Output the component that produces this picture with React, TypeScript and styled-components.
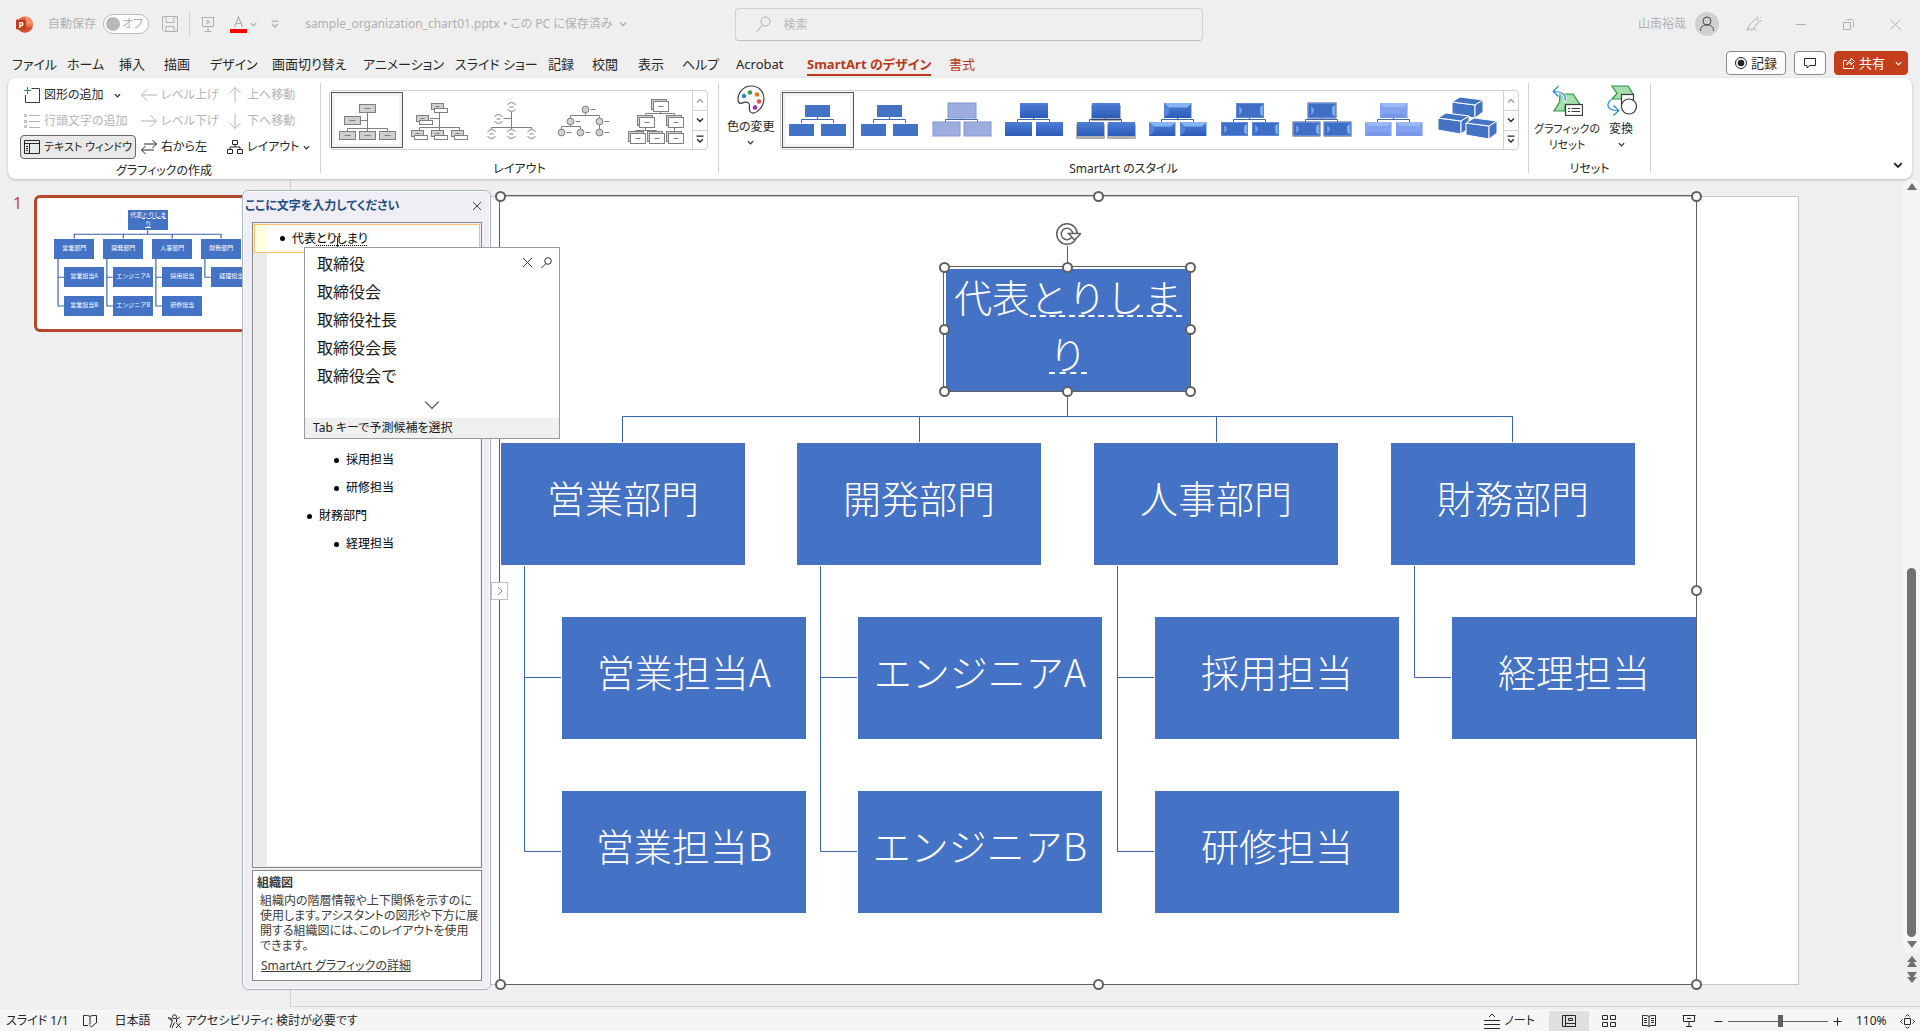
import React from "react";
import styled, { createGlobalStyle, css } from "styled-components";

const ui = `"Noto Sans", "Noto Sans CJK JP", sans-serif`;
const blue = "#4472c4";

const Global = createGlobalStyle`
  * { box-sizing: border-box; }
  body { margin: 0; background: #efefef; color: #262626; font-family: ${ui}; font-size: 12px; line-height: 16px; font-feature-settings: "palt"; overflow: hidden; }
  button, input { font: inherit; font-feature-settings: inherit; color: inherit; padding: 0; margin: 0; border: 0; background: none; }
  button { display: flex; align-items: center; white-space: nowrap; cursor: default; }
  svg { display: block; flex: none; }
  ul { list-style: none; margin: 0; padding: 0; }
`;

const Page = styled.div`
  height: 100vh;
  display: flex;
  flex-direction: column;
`;

/* ---------- title bar ---------- */
const TitleBar = styled.header`
  height: 48px;
  display: grid;
  grid-template-columns: 718fr 468px 700fr;
  align-items: center;
  color: #b0b0b0;
  padding: 0 17px 0 16px;
`;
const TitleSide = styled.div<{ $end?: boolean }>`
  display: flex;
  align-items: center;
  justify-content: ${(p) => (p.$end ? "flex-end" : "flex-start")};
  white-space: nowrap;
`;
const AutoSave = styled.label`
  display: flex;
  align-items: center;
  gap: 7px;
  margin: 0 13px 0 15px;
`;
const Toggle = styled.span`
  position: relative;
  width: 46px;
  height: 20px;
  border: 1px solid #b8b8b8;
  border-radius: 10px;
  background: #fff;
  line-height: 18px;
  text-align: right;
  padding-right: 5px;
  input {
    appearance: none;
    position: absolute;
    left: 2px;
    top: 2px;
    width: 14px;
    height: 14px;
    border-radius: 50%;
    background: #b8b8b8;
  }
`;
const Rule = styled.span`
  width: 1px;
  height: 24px;
  background: #d0d0d0;
  margin: 0 11px;
`;
const QuickButton = styled.button`
  margin-right: 14px;
`;
const FileName = styled.span`
  margin: 0 6px 0 12px;
`;
const Search = styled.label`
  display: flex;
  align-items: center;
  gap: 13px;
  height: 33px;
  margin-top: 1px;
  padding: 0 20px;
  border: 1px solid #d0d0d0;
  border-bottom-color: #bdbdbd;
  border-radius: 4px;
  input { flex: 1; outline: 0; }
  input::placeholder { color: #b8b8b8; opacity: 1; }
`;
const Avatar = styled.span`
  width: 24px;
  height: 24px;
  border-radius: 50%;
  background: #d0d0d0;
  display: grid;
  place-items: center;
  margin: 0 27px 0 9px;
`;
const WindowButton = styled.button`
  width: 16px;
  height: 24px;
  justify-content: center;
  margin-left: 31px;
`;

/* ---------- tabs ---------- */
const TabRow = styled.nav`
  height: 30px;
  display: flex;
  align-items: center;
  padding: 0 12px;
  font-size: 13px;
`;
const Tab = styled.button<{ $w: number; $active?: boolean; $accent?: boolean }>`
  width: ${(p) => p.$w}px;
  height: 28px;
  padding-top: 4px;
  flex: none;
  ${(p) => p.$accent && css`color: #b7391a;`}
  ${(p) => p.$active && css`font-weight: 700;`}
  span {
    border-bottom: 2px solid ${(p) => (p.$active ? "#b7391a" : "transparent")};
    height: 22px;
    line-height: 20px;
  }
`;
const Actions = styled.div`
  margin-left: auto;
  display: flex;
  gap: 8px;
  font-size: 13px;
`;
const ActionButton = styled.button<{ $primary?: boolean }>`
  height: 24px;
  gap: 4px;
  padding: 0 8px;
  border: 1px solid ${(p) => (p.$primary ? "#c43e1c" : "#8a8a8a")};
  border-radius: 4px;
  background: ${(p) => (p.$primary ? "#c43e1c" : "#fff")};
  color: ${(p) => (p.$primary ? "#fff" : "#262626")};
`;
const ShareChevron = styled.span`
  margin: 0 -3px 0 6px;
`;

/* ---------- ribbon ---------- */
const Ribbon = styled.section`
  height: 101px;
  margin: 0 8px;
  display: flex;
  background: #fff;
  border-radius: 8px;
  box-shadow: 0 1px 3px rgba(0, 0, 0, 0.22);
  position: relative;
  z-index: 3;
  flex: none;
`;
const Group = styled.div<{ $w: number }>`
  width: ${(p) => p.$w}px;
  display: flex;
  flex-direction: column;
  margin: 5px 0 6px;
  border-right: 1px solid #d4d4d4;
`;
const GroupBody = styled.div<{ $pad: string }>`
  flex: 1;
  display: flex;
  padding: ${(p) => p.$pad};
`;
const GroupLabel = styled.div`
  height: 16px;
  line-height: 24px;
  text-align: center;
`;
const CommandColumn = styled.div<{ $w: number }>`
  width: ${(p) => p.$w}px;
  display: flex;
  flex-direction: column;
  align-items: flex-start;
  gap: 2px;
`;
const Command = styled.button<{ $pressed?: boolean }>`
  height: 24px;
  gap: 4px;
  padding: 0 3px;
  border: 1px solid ${(p) => (p.$pressed ? "#666" : "transparent")};
  border-radius: 4px;
  background: ${(p) => (p.$pressed ? "#e9e9e9" : "none")};
  ${(p) => p.$pressed && css`font-size: 11px;`}
  &:disabled { color: #b4b4b4; }
`;
const Gallery = styled.div`
  height: 60px;
  display: flex;
  border: 1px solid #d0d0d0;
  border-radius: 4px;
  flex: 1;
`;
const GalleryItems = styled.div`
  flex: 1;
  display: flex;
  padding: 1px;
`;
const GalleryItem = styled.button<{ $selected?: boolean }>`
  width: 72px;
  height: 56px;
  justify-content: center;
  ${(p) => p.$selected && css`border: 1px solid #555; box-shadow: inset 0 0 0 3px #f3f3f3;`}
`;
const GalleryScroll = styled.div`
  width: 15px;
  display: grid;
  grid-template-rows: 1fr 1fr 1fr;
  border-left: 1px solid #d0d0d0;
  button { justify-content: center; }
  button + button { border-top: 1px solid #d0d0d0; }
`;
const BigButton = styled.button<{ $w: number; $compact?: boolean }>`
  width: ${(p) => p.$w}px;
  ${(p) => p.$compact && css`font-size: 11px;`}
  flex-direction: column;
  text-align: center;
  margin-top: 2px;
  height: 62px;
  svg + span { margin-top: 5px; }
  span + svg { margin-top: 4px; }
`;
const Collapse = styled.button`
  margin: auto 9px 9px auto;
`;

/* ---------- workspace ---------- */
const Workspace = styled.main`
  flex: 1;
  min-height: 0;
  display: flex;
  position: relative;
`;
const Thumbnails = styled.aside`
  width: 291px;
  border-right: 1px solid #d0d0d0;
  display: flex;
  align-items: flex-start;
  padding: 16px 14px 16px 13px;
  gap: 12px;
  margin-bottom: 3px;
  color: #c8472b;
  font-size: 16px;
`;
const Thumb = styled.button`
  width: 239px;
  height: 137px;
  border: 3px solid #b7472a;
  border-radius: 6px;
  background: #fff;
  position: relative;
  flex: none;
`;
const Stage = styled.div`
  flex: 1;
  min-width: 0;
  display: flex;
  border-bottom: 1px solid #d0d0d0;
  margin: 0 0 3px 2px;
  padding: 17px 0 21px 104px;
`;
const Slide = styled.div`
  flex: 1;
  background: #fff;
  border: 1px solid #c6c6c6;
  border-left: 0;
  position: relative;
`;
const ScrollTrack = styled.div`
  width: 17px;
  margin-left: 104px;
  margin-top: -17px;
  display: flex;
  flex-direction: column;
  align-items: center;
  color: #707070;
`;
const Track = styled.div`
  width: 17px;
  flex: 1;
  display: flex;
  flex-direction: column;
  align-items: center;
  background: #f5f5f5;
  border-radius: 8px;
  padding: 4px 0 5px;
`;
const ScrollThumb = styled.div`
  width: 9px;
  height: 369px;
  border-radius: 5px;
  background: #707070;
  margin: auto 0 4px;
`;
const ScrollStep = styled.button`
  height: 16px;
`;

/* ---------- diagram ---------- */
const Node = styled.div<{ $s: number; $x: number; $y: number; $lift?: number }>`
  position: absolute;
  left: ${(p) => Math.round(p.$x * p.$s)}px;
  top: ${(p) => Math.round(p.$y * p.$s)}px;
  width: ${(p) => Math.round(244 * p.$s)}px;
  height: ${(p) => Math.round(122 * p.$s)}px;
  padding-bottom: ${(p) => Math.round((p.$lift ?? 16) * p.$s)}px;
  background: ${blue};
  color: #fff;
  display: flex;
  align-items: center;
  justify-content: center;
  text-align: center;
  white-space: nowrap;
  font-family: "Noto Sans CJK JP", sans-serif;
  font-weight: ${(p) => (p.$s === 1 ? 300 : 400)};
  font-feature-settings: normal;
  font-size: ${(p) => Math.round(38 * p.$s)}px;
  line-height: ${(p) => Math.round(57 * p.$s)}px;
`;
const Composing = styled.span<{ $s: number }>`
  border-bottom: ${(p) => (p.$s === 1 ? 2 : 1)}px dashed #fff;
  line-height: 1;
  display: inline-block;
`;
const Lines = styled.svg`
  position: absolute;
  left: 0;
  top: 0;
  overflow: visible;
`;
const Frame = styled.div<{ $x: number; $y: number; $w: number; $h: number }>`
  position: absolute;
  left: ${(p) => p.$x}px;
  top: ${(p) => p.$y}px;
  width: ${(p) => p.$w}px;
  height: ${(p) => p.$h}px;
  border: 1px solid #606060;
`;
const Handle = styled.i<{ $x: number; $y: number }>`
  position: absolute;
  left: calc(${(p) => p.$x}% - 5px);
  top: calc(${(p) => p.$y}% - 5px);
  width: 11px;
  height: 11px;
  border: 2px solid #606060;
  border-radius: 50%;
  background: #fff;
`;
const Rotate = styled.svg`
  position: absolute;
  left: calc(50% - 12px);
  top: -48px;
`;

const columns = [
  { name: "営業部門", people: ["営業担当A", "営業担当B"] },
  { name: "開発部門", people: ["エンジニアA", "エンジニアB"] },
  { name: "人事部門", people: ["採用担当", "研修担当"] },
  { name: "財務部門", people: ["経理担当"] },
];
const colX = [104, 400, 697, 994];
const rowY = [420, 594];

function Chart({ s }: { s: number }) {
  return (
    <>
      <Lines width={1401 * s} height={788 * s} viewBox="0 0 1401 788" fill="none" stroke="#3a62ab" strokeWidth={s === 1 ? 1 : 7}>
        <path d="M670.5 195V219.5M225.5 245V219.5H1115.5V245M522.5 219.5V245M819.5 219.5V245" />
        {columns.map((c, i) => (
          <path key={c.name} d={c.people.map((_, k) => `M${colX[i] + 23.5} 369V${rowY[k] + 60.5}H${colX[i] + 60}`).join("")} />
        ))}
      </Lines>
      <Node $s={s} $x={549} $y={72} $lift={12}>
        <div>
          代表<Composing $s={s}>とりしま</Composing>
          <br />
          <Composing $s={s}>り</Composing>
        </div>
      </Node>
      {columns.map((c, i) => (
        <React.Fragment key={c.name}>
          <Node $s={s} $x={colX[i]} $y={246}>{c.name}</Node>
          {c.people.map((p, k) => (
            <Node key={p} $s={s} $x={colX[i] + 61} $y={rowY[k]}>{p}</Node>
          ))}
        </React.Fragment>
      ))}
    </>
  );
}

const ring: [number, number][] = [[0, 0], [50, 0], [100, 0], [0, 50], [100, 50], [0, 100], [50, 100], [100, 100]];

/* ---------- text pane ---------- */
const TextPane = styled.section`
  position: absolute;
  z-index: 1;
  left: 242px;
  top: 11px;
  bottom: 20px;
  width: 249px;
  display: flex;
  flex-direction: column;
  gap: 2px;
  padding: 1px 8px 8px 9px;
  background: #efeef5;
  border: 1px solid #a4b6bf;
  border-radius: 6px;
  box-shadow: inset 0 0 0 1px #fff;
  color: #000;
`;
const PaneTitle = styled.div`
  height: 28px;
  margin: 0 0 0 -7px;
  display: flex;
  align-items: center;
  justify-content: space-between;
  font-weight: 700;
  white-space: nowrap;
  color: #1f4e86;
`;
const Outline = styled.div`
  flex: 1;
  border: 1px solid #868686;
  background: linear-gradient(90deg, #ebebeb 13px, #fff 13px) content-box #fff;
  padding: 1px;
`;
const ActiveLine = styled.div`
  height: 29px;
  border: 1px solid #f7c067;
  background: linear-gradient(90deg, #ffffe1 12px, #fff 12px);
  display: flex;
  align-items: center;
  padding-left: 25px;
  position: relative;
  u { text-decoration: underline dotted; text-underline-offset: 2px; }
`;
const Bullet = styled.span`
  width: 5px;
  height: 5px;
  border-radius: 50%;
  background: #000;
  margin-right: 7px;
`;
const Branch = styled.ul`
  margin-top: 193px;
`;
const Leaf = styled.li<{ $level: number }>`
  height: 28px;
  display: flex;
  align-items: center;
  padding-left: ${(p) => 26 + p.$level * 27}px;
`;
const IBeam = styled.svg`
  position: absolute;
  left: 78px;
  top: 11px;
`;
const About = styled.div`
  height: 111px;
  border: 1px solid #868686;
  background: #fff;
  color: #3c3c3c;
  padding: 4px 4px;
  line-height: 15px;
  p { margin: 3px 0 5px 3px; width: 219px; }
  a { color: inherit; margin-left: 4px; }
`;
const Expander = styled.button`
  position: absolute;
  left: 491px;
  top: 403px;
  z-index: 2;
  width: 17px;
  height: 18px;
  justify-content: center;
  background: #fff;
  border: 1px solid #c0c0c0;
`;
const Ime = styled.div`
  position: absolute;
  z-index: 2;
  left: 304px;
  top: 68px;
  width: 256px;
  height: 192px;
  background: #fff;
  border: 1px solid #9a9a9a;
  color: #1a1a1a;
  display: flex;
  flex-direction: column;
  font-size: 16px;
  font-feature-settings: normal;
`;
const ImeBody = styled.div`
  display: flex;
  flex: 1;
  justify-content: space-between;
  padding: 2px 7px 0 12px;
  li { height: 28px; line-height: 28px; }
`;
const ImeTools = styled.div`
  display: flex;
  gap: 8px;
  height: 24px;
  align-items: center;
`;
const ImeMore = styled.button`
  height: 24px;
  padding-bottom: 2px;
  justify-content: center;
`;
const ImeHint = styled.div`
  height: 20px;
  line-height: 19px;
  padding-left: 8px;
  background: #efefef;
  font-size: 12px;
  font-feature-settings: "palt";
`;

/* ---------- status bar ---------- */
const StatusBar = styled.footer`
  height: 21px;
  flex: none;
  display: flex;
  align-items: center;
  background: #f5f5f5;
  border-top: 1px solid #fafafa;
  padding: 0 5px 0 6px;
`;
const StatusItem = styled.button<{ $gap: number; $end?: boolean }>`
  gap: 4px;
  margin-right: ${(p) => p.$gap}px;
  ${(p) => p.$end && css`margin-left: auto;`}
`;
const ViewButton = styled.button<{ $on?: boolean }>`
  width: 40px;
  height: 20px;
  justify-content: center;
  background: ${(p) => (p.$on ? "#dfdfdf" : "none")};
`;
const ZoomGroup = styled.div`
  display: flex;
  align-items: center;
  gap: 5px;
  margin-left: 5px;
`;
const Zoom = styled.input`
  appearance: none;
  width: 100px;
  height: 12px;
  background: linear-gradient(#606060, #606060) center / 100% 1px no-repeat;
  &::-webkit-slider-thumb {
    appearance: none;
    width: 5px;
    height: 12px;
    background: #606060;
  }
`;
const ZoomValue = styled.button`
  width: 32px;
  margin: 0 12px 0 14px;
`;

/* ---------- icons ---------- */
const Chevron = ({ w = 7, up = false, c = "currentColor", t = 1.4 }: { w?: number; up?: boolean; c?: string; t?: number }) => (
  <svg width={w} height={w} viewBox="0 0 8 8" fill="none" stroke={c} strokeWidth={t}>
    <path d={up ? "M1 5.5 4 2.5 7 5.5" : "M1 2.5 4 5.5 7 2.5"} />
  </svg>
);
const MoreIcon = ({ c = "currentColor" }) => (
  <svg width="8" height="9" viewBox="0 0 8 9" fill="none" stroke={c} strokeWidth="1.3">
    <path d="M0.5 1.2H7.5M1.2 4.2 4 7 6.8 4.2" />
  </svg>
);
const Line = ({ d, s = 16, c = "currentColor", children }: { d: string; s?: number; c?: string; children?: React.ReactNode }) => (
  <svg width={s} height={s} viewBox={`0 0 ${s} ${s}`} fill="none" stroke={c}>
    <path d={d} />
    {children}
  </svg>
);
const PptLogo = () => (
  <svg width="17" height="17" viewBox="0 0 17 17">
    <circle cx="9" cy="8.5" r="8" fill="#ed6c47" />
    <path d="M9 .5a8 8 0 0 1 8 8H9z" fill="#ff8f6b" />
    <path d="M1.5 11h15A8 8 0 0 1 3 14z" fill="#d35230" />
    <rect x="0" y="3.6" width="10" height="10" rx="1" fill="#c43e1c" />
    <text x="2.4" y="11.6" fontSize="8.5" fontWeight="700" fill="#fff" fontFamily="Open Sans, sans-serif">P</text>
  </svg>
);

function LayoutIcon({ kind }: { kind: number }) {
  const g = "#7f7f7f", f = "#d0d0d0";
  const tree = "M31 11V33M11 33V29.5H51V33";
  if (kind === 0)
    return (
      <svg width="62" height="44" viewBox="0 0 62 44" stroke={g} fill={f}>
        <path d="M31.5 13V33M11.5 33V30.5H51.5V33M24 22.5H31" fill="none" />
        {[[23.5, 6.5], [8.5, 18.5], [3.5, 33.5], [23.5, 33.5], [43.5, 33.5]].map(([x, y]) => (
          <g key={x + "," + y}><rect x={x} y={y} width="16" height="8" /><path d={`M${x + 5} ${y + 4}h6`} /></g>
        ))}
      </svg>
    );
  if (kind === 1)
    return (
      <svg width="62" height="44" viewBox="0 0 62 44" stroke={g} fill={f}>
        <path d="M31.5 13V33M11.5 33V29.5H51.5V33M22 20.5H31" fill="none" />
        {[[23.5, 5.5], [8.5, 17.5], [3.5, 32.5], [23.5, 32.5], [43.5, 32.5]].map(([x, y]) => (
          <g key={x + "," + y}><rect x={x} y={y} width="12" height="6" /><path d={`M${x + 4} ${y + 3}h4`} /><rect x={x + 3} y={y + 5} width="13" height="4" fill="#fff" /></g>
        ))}
      </svg>
    );
  if (kind === 2)
    return (
      <svg width="62" height="44" viewBox="0 0 62 44" stroke={g} fill="none">
        <path d={tree + "M22 20.5H31"} transform="translate(.5 0)" />
        {[[31.5, 9], [18.5, 21], [11.5, 36], [31.5, 36], [51.5, 36]].map(([x, y]) => (
          <g key={x + "," + y}><circle cx={x} cy={y} r="5" fill="#fff" stroke="none" /><path d={`M${x - 4} ${y - 2}a4.5 4.5 0 0 1 8 0M${x - 4} ${y + 2}a4.5 4.5 0 0 0 8 0M${x - 2} ${y}h4`} /></g>
        ))}
      </svg>
    );
  if (kind === 3)
    return (
      <svg width="62" height="44" viewBox="0 0 62 44" stroke={g} fill={f}>
        <path d="M33.5 12V17.5M18.5 22V17.5H47.5V33M18.5 26V28.5M9.5 33V28.5H28.5V33" fill="none" />
        {[[33.5, 11.5], [18.5, 23.5], [47.5, 23.5], [9.5, 34.5], [28.5, 34.5], [47.5, 34.5]].map(([x, y]) => (
          <g key={x + "," + y}><circle cx={x} cy={y} r="3.4" /><path d={`M${x + 5} ${y}h5`} /></g>
        ))}
      </svg>
    );
  return (
    <svg width="62" height="50" viewBox="0 0 62 50" stroke={g} fill={f}>
      <path d="M36.5 16V18.5M21.5 22V18.5H50.5V22M21.5 32V35.5M11.5 38V35.5H32.5V38M50.5 32V38" fill="none" />
      {[[27.5, 4.5], [13.5, 20.5], [42.5, 20.5], [4.5, 36.5], [23.5, 36.5], [42.5, 36.5]].map(([x, y]) => (
        <g key={x + "," + y}><rect x={x} y={y} width="15" height="10" /><rect x={x + 2} y={y + 2} width="15" height="10" fill="#fff" /><path d={`M${x + 7} ${y + 7}h5`} /></g>
      ))}
    </svg>
  );
}

function StyleIcon({ kind }: { kind: number }) {
  if (kind === 9)
    return (
      <svg width="64" height="50" viewBox="0 0 64 50" fill={blue} stroke="#fff" strokeWidth="1">
        {[[18, 2], [4, 18], [32, 23]].map(([x, y]) => (
          <g key={x}>
            <path d={`M${x} ${y + 5} ${x + 23} ${y + 8}V${y + 21}L${x} ${y + 17}z`} />
            <path d={`M${x} ${y + 5} ${x + 8} ${y} ${x + 31} ${y + 3} ${x + 23} ${y + 8}z`} />
            <path d={`M${x + 23} ${y + 8} ${x + 31} ${y + 3}V${y + 15}L${x + 23} ${y + 21}z`} />
          </g>
        ))}
      </svg>
    );
  const small = kind < 2;
  const boxes = small ? [[19, 7, 25, 12], [3, 26, 25, 12], [35, 26, 25, 12]] : [[18, 5, 28, 15], [3, 24, 27, 14], [34, 24, 27, 14]];
  const fill = small ? blue : kind === 2 ? "#9dade0" : kind === 8 ? "#83a3f0" : kind > 5 ? "#3f6ec6" : `url(#face${kind})`;
  const stroke = kind === 2 ? "#8196d2" : kind === 7 ? "#4a5673" : "none";
  return (
    <svg width="64" height="44" viewBox="0 0 64 44">
      <defs>
        <linearGradient id={`face${kind}`} x1="0" y1="0" x2="0" y2="1">
          <stop offset="0" stopColor="#4f7fd6" />
          <stop offset="1" stopColor="#2a5cb8" />
        </linearGradient>
        <linearGradient id={`glow${kind}`} x1="0" y1="0" x2="1" y2="0">
          <stop offset="0" stopColor="#9cd0ff" stopOpacity="0.5" />
          <stop offset="0.5" stopColor="#9cd0ff" />
          <stop offset="1" stopColor="#9cd0ff" stopOpacity="0.5" />
        </linearGradient>
      </defs>
      <path d="M31.5 19V21.5M15.5 25V21.5H47.5V25" fill="none" stroke="#4267ac" />
      {boxes.map(([x, y, w, h]) => (
        <g key={x + "," + y}>
          {kind === 4 && <rect x={x - 1} y={y + 2} width={w + 2} height={h + 1} rx="1" fill="#000" opacity="0.3" />}
          <rect x={x} y={y} width={w} height={h} fill={fill} stroke={stroke} />
          {kind === 5 && (
            <>
              <path d={`M${x} ${y}h${w}l-5 4.500h-${w - 10}z`} fill="#86b4f4" />
              <path d={`M${x} ${y + h}v-${h}l5 4.500v${h - 9}z`} fill="#5584d8" />
              <path d={`M${x + w - 1} ${y}v${h}h1v-${h}z`} fill="#9cc4f6" />
            </>
          )}
          {(kind === 6 || kind === 7) && (
            <>
              <rect x={x + 0.5} y={y + 0.5} width={w - 1} height={h - 1} fill="none" stroke="#5e8bdc" />
              <path d={`M${x + 3} ${y + 3}v${h - 6}l3 -3v-${h - 12}z`} fill={`url(#glow${kind})`} opacity="0.6" />
              <path d={`M${x + w - 1} ${y + 2}v${h - 3}l-3 -3v-${h - 8}z`} fill={`url(#glow${kind})`} opacity="0.8" />
            </>
          )}
          {kind === 8 && (
            <>
              <path d={`M${x} ${y}h${w}l-4 4h-${w - 8}z`} fill="#9cb8f6" />
              <path d={`M${x} ${y + h}h${w}l-4 -4h-${w - 8}z`} fill="#7696e6" />
              <path d={`M${x + w - 1} ${y}v${h}h1v-${h}z`} fill="#b2c8fa" />
            </>
          )}
        </g>
      ))}
    </svg>
  );
}

const Palette = () => (
  <svg width="28" height="29" viewBox="0 0 28 29">
    <path d="M14 1C6.500 1 1 7.500 1 14.500c0 3 1.500 4.500 3.800 3.600 3-1.200 5.500-2 7.200.4 1.400 2-.6 5.500 1 8 1.500 2.300 5 2 8-.6 3.500-3 6-7 6-11.900C27 6 21.500 1 14 1z" fill="#fafafa" stroke="#3b3b3b" strokeWidth="1.2" />
    <circle cx="7" cy="11" r="2.200" fill="#2488d8" /><circle cx="13" cy="7.500" r="2.200" fill="#2f9e4f" />
    <circle cx="20" cy="9.500" r="2.200" fill="#e8730c" /><circle cx="22" cy="16.500" r="2.200" fill="#f04b4b" /><circle cx="18" cy="22.500" r="2.200" fill="#9332a8" />
  </svg>
);
const ResetIcon = () => (
  <svg width="31" height="31" viewBox="0 0 31 31" fill="none" strokeWidth="1.2">
    <path d="M8 9H21L29 21H13V26H2L7.500 17z" fill="#a6dcae" stroke="#2f9146" />
    <path d="M13 17C14.500 10 10 6.500 1.500 6.500M6.500 1 1.200 6.500 6.500 11.500" stroke="#fff" strokeWidth="3" />
    <path d="M13 16C14.500 10 10 6.500 1.500 6.500M6.500 1 1.200 6.500 6.500 11.500" stroke="#2488d8" />
    <rect x="13.500" y="19.500" width="17" height="11" fill="#fff" stroke="#3b3b3b" />
    <path d="M16 23.500h2M19.500 23.500h8.500M16 26.500h2M19.500 26.500h8.500" stroke="#3b3b3b" />
  </svg>
);
const ConvertIcon = () => (
  <svg width="31" height="31" viewBox="0 0 31 31" fill="none" strokeWidth="1.200">
    <path d="M6 1H22L27 9V14H6L11 8.500z" fill="#a6dcae" stroke="#2f9146" />
    <rect x="15.500" y="9.500" width="12" height="12" fill="#fff" stroke="#3b3b3b" />
    <circle cx="23" cy="21.500" r="7.500" fill="#fff" stroke="#3b3b3b" />
    <path d="M5 15C0 19 .5 25.500 12 25.500M7.500 20.500 12.800 25.500 7.500 30.500" stroke="#2488d8" />
  </svg>
);

const tabs: [string, number][] = [
  ["ファイル", 55], ["ホーム", 52], ["挿入", 45], ["描画", 46], ["デザイン", 62], ["画面切り替え", 91], ["アニメーション", 92],
  ["スライド ショー", 93], ["記録", 44], ["校閲", 46], ["表示", 44], ["ヘルプ", 54], ["Acrobat", 71],
];

const Scroller = () => (
  <GalleryScroll>
    <button aria-label="前へ"><Chevron up c="#9a9a9a" w={8} /></button>
    <button aria-label="次へ"><Chevron w={8} /></button>
    <button aria-label="その他"><MoreIcon /></button>
  </GalleryScroll>
);

export default function App() {
  return (
    <Page>
      <Global />
      <TitleBar>
        <TitleSide>
          <PptLogo />
          <AutoSave>
            自動保存
            <Toggle><input type="checkbox" aria-label="自動保存" />オフ</Toggle>
          </AutoSave>
          <button aria-label="保存"><Line d="M.5 .5H15.500V15.500H2.500L.5 13.500zM4 .5V6.500H12V.5M4 15.500V10.500H12V15.500" /></button>
          <Rule />
          <QuickButton aria-label="スライドショー"><Line d="M0 .5H14M1.500 .5V9.500H12.500V.5M7 9.500V14.500M3.500 14.500H10.500M6 3 9 5 6 7z" s={15} /></QuickButton>
          <QuickButton aria-label="フォントの色">
            <svg width="17" height="17" viewBox="0 0 17 17"><path d="M4.500 11 8.500 1 12.500 11M6 7.500H11" fill="none" stroke="#b0b0b0" strokeWidth="1.200" /><rect y="13" width="17" height="4" fill="#f00" /></svg>
            &nbsp;<Chevron />
          </QuickButton>
          <QuickButton aria-label="カスタマイズ"><MoreIcon /></QuickButton>
          <FileName>sample_organization_chart01.pptx • この PC に保存済み</FileName>
          <Chevron w={8} />
        </TitleSide>
        <Search>
          <svg width="15" height="17" viewBox="0 0 15 17" fill="none" stroke="currentColor"><circle cx="9.500" cy="5.500" r="4.500" /><path d="M6.500 9 .5 16" /></svg>
          <input placeholder="検索" aria-label="検索" />
        </Search>
        <TitleSide $end>
          山南裕哉
          <Avatar><Line c="#4a4a4a" d="M1.500 15C1.500 10.500 4 9 8 9S14.500 10.500 14.500 15"><circle cx="8" cy="5" r="4" /></Line></Avatar>
          <button aria-label="ペン"><Line d="M1 14.500 3 9.500 10 2.500 13 5.500 6 14.500 3.500 12.500zM10 14.500 8 12M11.500 .5V2M15 1 13.500 2.500M15.500 5H14" /></button>
          <WindowButton aria-label="最小化"><Line d="M0 5.500H10" s={11} /></WindowButton>
          <WindowButton aria-label="元に戻す"><Line d="M.5 3.500H7.500V10.500H.5zM2.500 1.500C3 .7 3.500 .5 4.500 .5H8.500C9.800 .5 10.500 1.200 10.500 2.500V6.500C10.500 8 10 8.500 9.500 8.500" s={11} /></WindowButton>
          <WindowButton aria-label="閉じる"><Line d="M.5 .5 10.500 10.500M10.500 .5 .5 10.500" s={11} /></WindowButton>
        </TitleSide>
      </TitleBar>

      <TabRow>
        {tabs.map(([t, w]) => <Tab key={t} $w={w}><span>{t}</span></Tab>)}
        <Tab $w={142} $active $accent><span>SmartArt のデザイン</span></Tab>
        <Tab $w={40} $accent><span>書式</span></Tab>
        <Actions>
          <ActionButton><svg width="12" height="12" viewBox="0 0 12 12"><circle cx="6" cy="6" r="5.500" fill="none" stroke="currentColor" /><circle cx="6" cy="6" r="3.300" fill="currentColor" /></svg>記録</ActionButton>
          <ActionButton aria-label="コメント"><Line s={14} d="M1.500 2.500H12.500V9.500H7L4 12V9.500H1.500z" /></ActionButton>
          <ActionButton $primary><Line s={12} d="M4 3.500H.5V11.500H10.500V8M4 8C4 5 6 3.500 8 3.500V1L11.500 4.500 8 8V5.500C6.500 5.500 5 6 4 8z" />共有<ShareChevron><Chevron /></ShareChevron></ActionButton>
        </Actions>
      </TabRow>

      <Ribbon>
        <Group $w={313}>
          <GroupBody $pad="0 0 0 12px">
            <CommandColumn $w={117}>
              <Command>
                <svg width="16" height="16" viewBox="0 0 16 16" fill="none" stroke="#3b3b3b"><path d="M7.500 1.500H15.500V15.500H1.500V8" /><path d="M3.500 0V7M0 3.500H7" stroke="#2f9146" /></svg>
                図形の追加&ensp;<Chevron />
              </Command>
              <Command disabled><Line d="M5 2.500H16M5 8.500H16M5 14.500H16M.5 1.500h2v2h-2zM.5 7.500h2v2h-2zM.5 12.500h2v2h-2z" />行頭文字の追加</Command>
              <Command $pressed><Line d="M.5 1.500H15.500V14.500H.5zM.5 4.500H15.500M5.500 4.500V14.500M2 7.500h2M2 9.500h2M2 11.500h2" />テキスト ウィンドウ</Command>
            </CommandColumn>
            <CommandColumn $w={86}>
              <Command disabled><Line d="M.5 8H16M6.500 2 .5 8 6.500 14" />レベル上げ</Command>
              <Command disabled><Line d="M0 8H15.500M9.500 2 15.500 8 9.500 14" />レベル下げ</Command>
              <Command><Line d="M3 5H15.500M11.500 1 15.500 5 11.500 9M13 11H.5M4.500 7 .5 11 4.500 15" />右から左</Command>
            </CommandColumn>
            <CommandColumn $w={96}>
              <Command disabled><Line d="M8 .5V16M2.500 6 8 .5 13.500 6" />上へ移動</Command>
              <Command disabled><Line d="M8 0V15.500M2.500 10 8 15.500 13.500 10" />下へ移動</Command>
              <Command><Line d="M5.500 1.500h5v4h-5zM.5 10.500h5v4h-5zM10.500 10.500h5v4h-5zM8 5.500V8M3 10.500V8H13V10.500" />レイアウト<Chevron /></Command>
            </CommandColumn>
          </GroupBody>
          <GroupLabel>グラフィックの作成</GroupLabel>
        </Group>
        <Group $w={398}>
          <GroupBody $pad="7px 11px 0 8px">
            <Gallery>
              <GalleryItems>
                {[0, 1, 2, 3, 4].map((k) => <GalleryItem key={k} $selected={k === 0} aria-label={`レイアウト ${k + 1}`}><LayoutIcon kind={k} /></GalleryItem>)}
              </GalleryItems>
              <Scroller />
            </Gallery>
          </GroupBody>
          <GroupLabel>レイアウト</GroupLabel>
        </Group>
        <Group $w={810}>
          <GroupBody $pad="0 11px 0 8px">
            <BigButton $w={48}><Palette /><span>色の変更</span><Chevron /></BigButton>
            <GroupBody $pad="7px 0 0 5px">
              <Gallery>
                <GalleryItems>
                  {[0, 1, 2, 3, 4, 5, 6, 7, 8, 9].map((k) => <GalleryItem key={k} $selected={k === 0} aria-label={`スタイル ${k + 1}`}><StyleIcon kind={k} /></GalleryItem>)}
                </GalleryItems>
                <Scroller />
              </Gallery>
            </GroupBody>
          </GroupBody>
          <GroupLabel>SmartArt のスタイル</GroupLabel>
        </Group>
        <Group $w={122}>
          <GroupBody $pad="0 4px 0 5px">
            <BigButton $w={66} $compact><ResetIcon /><span>グラフィックの<br />リセット</span></BigButton>
            <BigButton $w={42}><ConvertIcon /><span>変換</span><Chevron /></BigButton>
          </GroupBody>
          <GroupLabel>リセット</GroupLabel>
        </Group>
        <Collapse aria-label="リボンを折りたたむ"><Chevron w={10} t={1.500} /></Collapse>
      </Ribbon>

      <Workspace>
        <Thumbnails>
          1
          <Thumb aria-label="スライド 1"><Chart s={0.165} /></Thumb>
        </Thumbnails>
        <Stage>
          <Slide>
            <Chart s={1} />
            <Frame $x={102} $y={-2} $w={1198} $h={790}>
              {ring.map(([x, y]) => <Handle key={x + "-" + y} $x={x} $y={y} />)}
            </Frame>
            <Frame $x={546} $y={69} $w={248} $h={126}>
              <Rotate width="26" height="48" viewBox="0 0 26 48" fill="none" stroke="#606060" strokeWidth="1.500">
                <path d="M12.500 27V48" strokeWidth="1" />
                <circle cx="12" cy="15" r="8" stroke="#606060" strokeWidth="6" />
                <circle cx="12" cy="15" r="8" stroke="#fff" strokeWidth="3" />
                <path d="M13.500 14.500H26L19.500 21z" fill="#fff" />
              </Rotate>
              {ring.map(([x, y]) => <Handle key={x + "-" + y} $x={x} $y={y} />)}
            </Frame>
          </Slide>
          <ScrollTrack>
            <Track>
              <svg width="10" height="7" viewBox="0 0 10 7"><path d="M5 0 10 7H0z" fill="#707070" /></svg>
              <ScrollThumb />
              <svg width="10" height="7" viewBox="0 0 10 7"><path d="M5 7 10 0H0z" fill="#707070" /></svg>
            </Track>
            <ScrollStep aria-label="前のスライド"><svg width="10" height="11" viewBox="0 0 10 11"><path d="M5 0 10 6H0zM5 4 10 11H0z" fill="#707070" /></svg></ScrollStep>
            <ScrollStep aria-label="次のスライド"><svg width="10" height="11" viewBox="0 0 10 11"><path d="M5 11 10 5H0zM5 7 10 0H0z" fill="#707070" /></svg></ScrollStep>
          </ScrollTrack>
        </Stage>

        <TextPane>
          <PaneTitle>ここに文字を入力してください<button aria-label="閉じる"><Line s={10} c="#444" d="M1 1 9 9M9 1 1 9" /></button></PaneTitle>
          <Outline>
            <ActiveLine>
              <Bullet />代表<u>とりしまり</u>
              <IBeam width="9" height="18" viewBox="0 0 9 18" fill="none" stroke="#222"><path d="M1 .5H3.500L4.500 1.500 5.500 .5H8M4.500 1.500V16.500M1 17.500H3.500L4.500 16.500 5.500 17.500H8" /></IBeam>
            </ActiveLine>
            <Branch>
              <Leaf $level={2}><Bullet />採用担当</Leaf>
              <Leaf $level={2}><Bullet />研修担当</Leaf>
              <Leaf $level={1}><Bullet />財務部門</Leaf>
              <Leaf $level={2}><Bullet />経理担当</Leaf>
            </Branch>
          </Outline>
          <About>
            <b>組織図</b>
            <p>組織内の階層情報や上下関係を示すのに使用します。アシスタントの図形や下方に展開する組織図には、このレイアウトを使用できます。</p>
            <a href="#smartart">SmartArt グラフィックの詳細</a>
          </About>
        </TextPane>
        <Expander aria-label="テキスト ウィンドウ"><Line s={10} c="#8a8a8a" d="M3 1 7 5 3 9" /></Expander>
        <Ime>
          <ImeBody>
            <ul><li>取締役</li><li>取締役会</li><li>取締役社長</li><li>取締役会長</li><li>取締役会で</li></ul>
            <ImeTools>
              <button aria-label="閉じる"><Line s={11} c="#333" d="M1 1 10 10M10 1 1 10" /></button>
              <button aria-label="検索"><Line s={11} c="#333" d="M5 6.500 .5 11"><circle cx="7" cy="4" r="3.300" /></Line></button>
            </ImeTools>
          </ImeBody>
          <ImeMore aria-label="候補を展開"><Chevron w={18} c="#555" t={0.6} /></ImeMore>
          <ImeHint>Tab キーで予測候補を選択</ImeHint>
        </Ime>
      </Workspace>

      <StatusBar>
        <StatusItem $gap={14}>スライド 1/1</StatusItem>
        <StatusItem $gap={18} aria-label="スペルチェック"><Line s={14} d="M7 2.500C6 1.500 4 1.500 .5 1.500V11.500H5M7 2.500C8 1.500 10 1.500 13.500 1.500V9M7 2.500V10M6 10.500 8.500 13 13 9" /></StatusItem>
        <StatusItem $gap={16}>日本語</StatusItem>
        <StatusItem $gap={0}>
          <Line s={15} d="M1.500 3.500 5 5V8L3 13.500M1.500 3.500C1 5 3 5 5 6.500M13 3.500 9.500 5V8M7.500 8.500 5 14M9 8.500 14 14M14 8.500 9 14"><circle cx="7.500" cy="2.800" r="2" /></Line>
          アクセシビリティ: 検討が必要です
        </StatusItem>
        <StatusItem $gap={14} $end><Line d="M0 7.500H16M0 11.500H16M0 15.500H16M5 4 8 1 11 4" />ノート</StatusItem>
        <ViewButton $on aria-label="標準"><Line s={14} d="M.5 1.500H13.500V12.500H.5zM3.500 1.500V12.500M3.500 9.500H13.500M6.500 4.500H10.500V6.500H6.500z" /></ViewButton>
        <ViewButton aria-label="スライド一覧"><Line s={14} d="M.5 1.500h5v4h-5zM8.500 1.500h5v4h-5zM.5 8.500h5v4h-5zM8.500 8.500h5v4h-5z" /></ViewButton>
        <ViewButton aria-label="閲覧表示"><Line s={14} d="M7 2.500C6 1.500 4 1.500 .5 1.500V11.500H5L7 12.500 9 11.500H13.500V1.500C10 1.500 8 1.500 7 2.500V12M2 4.500H5M2 6.500H5M2 8.500H5M9 4.500H12M9 6.500H12M9 8.500H12" /></ViewButton>
        <ViewButton aria-label="スライドショー"><Line s={14} d="M.5 1.500H13.500M1.500 1.500V7.500H12.500V1.500M5 4.500H9M7 7.500V12.500M4 12.500H10" /></ViewButton>
        <ZoomGroup>
          <button aria-label="縮小"><Line s={9} d="M.5 4.500H8.500" /></button>
          <Zoom type="range" min={0} max={100} defaultValue={53} aria-label="ズーム" />
          <button aria-label="拡大"><Line s={9} d="M.5 4.500H8.500M4.500 .5V8.500" /></button>
        </ZoomGroup>
        <ZoomValue>110%</ZoomValue>
        <button aria-label="ウィンドウに合わせる"><Line s={15} d="M4.500 4.500H10.500V10.500H4.500zM5.500 2.500 7.500 .5 9.500 2.500M5.500 12.500 7.500 14.500 9.500 12.500M2.500 5.500 .5 7.500 2.500 9.500M12.500 5.500 14.500 7.500 12.500 9.500" /></button>
      </StatusBar>
    </Page>
  );
}
